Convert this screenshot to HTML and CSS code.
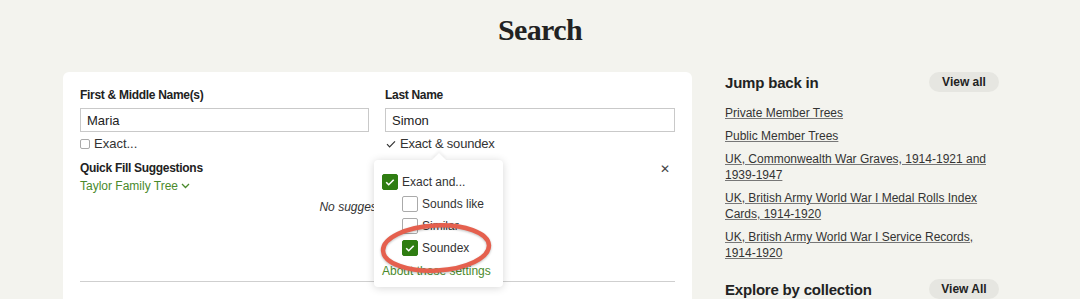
FILE: index.html
```html
<!DOCTYPE html>
<html lang="en">
<head>
  <meta charset="UTF-8">
  <meta name="viewport" content="width=device-width, initial-scale=1.0">
  <title>Search</title>
  <link rel="stylesheet" href="styles.css">
</head>
<body>
  <h1 class="page-title">Search</h1>

  <div class="page">
    <div class="search-card">
      <div class="name-fields">
        <div class="field">
          <label class="field-label">First &amp; Middle Name(s)</label>
          <input class="field-input" type="text" value="Maria">
          <div class="field-option">
            <span class="small-box"></span>
            <span>Exact...</span>
          </div>
        </div>
        <div class="field">
          <label class="field-label">Last Name</label>
          <input class="field-input" type="text" value="Simon">
          <div class="field-option with-popover">
            <svg class="tick" width="10" height="10" viewBox="0 0 10 10"><path d="M1 5.2l2.6 2.6L9 2.4" fill="none" stroke="#333" stroke-width="1.2"/></svg>
            <span>Exact &amp; soundex</span>

            <div class="popover">
              <div class="pop-row">
                <span class="check on"><svg width="12" height="12" viewBox="0 0 12 12"><path d="M2.2 6.2l2.5 2.5 5-5" fill="none" stroke="#fff" stroke-width="1.6"/></svg></span>
                <span>Exact and...</span>
              </div>
              <div class="pop-row sub">
                <span class="check"></span>
                <span>Sounds like</span>
              </div>
              <div class="pop-row sub">
                <span class="check"></span>
                <span>Similar</span>
              </div>
              <div class="pop-row sub">
                <span class="check on"><svg width="12" height="12" viewBox="0 0 12 12"><path d="M2.2 6.2l2.5 2.5 5-5" fill="none" stroke="#fff" stroke-width="1.6"/></svg></span>
                <span>Soundex</span>
              </div>
              <a class="pop-link" href="#">About these settings</a>

              <svg class="callout" width="120" height="60" viewBox="0 0 120 60">
                <ellipse cx="60" cy="29" rx="53" ry="22.5" transform="rotate(-3 60 29)" fill="none" stroke="#e5604e" stroke-width="4.5"/>
              </svg>
            </div>
          </div>
        </div>
      </div>

      <div class="quick-fill">
        <div class="quick-head">
          <span class="quick-title">Quick Fill Suggestions</span>
          <span class="close">&#x2715;</span>
        </div>
        <a class="tree-link" href="#">Taylor Family Tree
          <svg width="9" height="6" viewBox="0 0 9 6"><path d="M1 1l3.5 3.5L8 1" fill="none" stroke="#4a8a2c" stroke-width="1.3"/></svg>
        </a>
        <p class="no-suggest">No suggestions found</p>
      </div>
      <div class="divider"></div>
    </div>

    <aside class="sidebar">
      <div class="side-head">
        <h2>Jump back in</h2>
        <button class="pill">View all</button>
      </div>
      <ul class="side-links">
        <li><a href="#">Private Member Trees</a></li>
        <li><a href="#">Public Member Trees</a></li>
        <li><a href="#">UK, Commonwealth War Graves, 1914-1921 and 1939-1947</a></li>
        <li><a href="#">UK, British Army World War I Medal Rolls Index Cards, 1914-1920</a></li>
        <li><a href="#">UK, British Army World War I Service Records, 1914-1920</a></li>
      </ul>
      <div class="side-head">
        <h2>Explore by collection</h2>
        <button class="pill">View All</button>
      </div>
    </aside>
  </div>
</body>
</html>
```

FILE: styles.css
```css
/* page */
body {
  margin: 0;
  background: #f3f3ee;
  font-family: "Liberation Sans", Arial, sans-serif;
  color: #2b2b2b;
  overflow: hidden;
}

.page-title {
  margin: 0;
  height: 72px;
  padding-top: 12px;
  box-sizing: border-box;
  text-align: center;
  font-family: "Liberation Serif", "Times New Roman", serif;
  font-size: 30px;
  line-height: 36px;
  letter-spacing: -0.6px;
  color: #222;
}

.page {
  display: flex;
  align-items: flex-start;
  gap: 33px;
  padding-left: 63px;
}

/* search card */
.search-card {
  width: 629px;
  min-height: 300px;
  box-sizing: border-box;
  padding: 15px 17px 0;
  background: #fff;
  border-radius: 6px;
}

.name-fields {
  display: grid;
  grid-template-columns: 289px 290px;
  gap: 16px;
}

.field-label {
  display: block;
  font-size: 12px;
  font-weight: bold;
  line-height: 16px;
  letter-spacing: -0.3px;
  margin-bottom: 5px;
  color: #222;
}

.field-input {
  display: block;
  width: 100%;
  height: 24px;
  box-sizing: border-box;
  border: 1px solid #c9c9c9;
  padding: 0 6px;
  font-family: inherit;
  font-size: 13px;
  color: #222;
}

.field-option {
  display: flex;
  align-items: center;
  gap: 4px;
  margin-top: 4px;
  font-size: 13px;
  line-height: 16px;
  color: #333;
}

.small-box {
  width: 10px;
  height: 10px;
  border: 1px solid #aaa;
  border-radius: 2px;
  box-sizing: border-box;
}

.with-popover {
  position: relative;
  letter-spacing: -0.2px;
}

.tick {
  margin-left: 1px;
}

/* popover */
.popover {
  position: absolute;
  left: -11px;
  top: 24px;
  width: 129px;
  height: 127px;
  box-sizing: border-box;
  padding: 14px 8px;
  background: #fff;
  border-radius: 4px;
  box-shadow: 0 1px 8px rgba(0, 0, 0, 0.16);
  letter-spacing: 0;
  z-index: 2;
}

.popover::before {
  content: "";
  position: absolute;
  left: 60px;
  top: -5px;
  width: 10px;
  height: 10px;
  background: #fff;
  transform: rotate(45deg);
  box-shadow: -2px -2px 3px rgba(0, 0, 0, 0.05);
}

.pop-row {
  position: relative;
  display: flex;
  align-items: center;
  gap: 4px;
  height: 16px;
  margin-bottom: 6px;
  font-size: 12px;
  color: #333;
}

.pop-row.sub {
  padding-left: 20px;
}

.check {
  width: 16px;
  height: 16px;
  box-sizing: border-box;
  border: 1px solid #aaa;
  border-radius: 2px;
  display: flex;
  align-items: center;
  justify-content: center;
  background: #fff;
}

.check.on {
  background: #2f7d12;
  border-color: #2f7d12;
}

.pop-link {
  display: block;
  margin-top: 7px;
  font-size: 12px;
  line-height: 16px;
  color: #4a8a2c;
  text-decoration: none;
  white-space: nowrap;
}

.callout {
  position: absolute;
  left: 2px;
  top: 59px;
  filter: drop-shadow(0 1px 1px rgba(0, 0, 0, 0.25));
}

/* quick fill */
.quick-fill {
  margin-top: 8px;
}

.quick-head {
  display: flex;
  justify-content: space-between;
  align-items: center;
}

.quick-title {
  font-size: 12px;
  font-weight: bold;
  line-height: 16px;
  letter-spacing: -0.3px;
  color: #222;
}

.close {
  font-size: 12px;
  color: #444;
  margin-right: 5px;
  margin-top: 2px;
}

.tree-link {
  display: inline-flex;
  align-items: center;
  gap: 3px;
  margin-top: 2px;
  font-size: 12px;
  line-height: 16px;
  color: #4a8a2c;
  text-decoration: none;
}

.no-suggest {
  margin: 5px 0 0;
  text-align: center;
  font-size: 12px;
  font-style: italic;
  line-height: 16px;
  color: #333;
}

.divider {
  margin-top: 66px;
  border-top: 1px solid #cfcfcf;
}

/* sidebar */
.sidebar {
  width: 274px;
}

.side-head {
  display: flex;
  justify-content: space-between;
  align-items: center;
  height: 20px;
}

.side-head h2 {
  margin: 0;
  font-size: 15px;
  font-weight: bold;
  letter-spacing: -0.2px;
  color: #222;
}

.pill {
  width: 70px;
  height: 20px;
  border: none;
  border-radius: 10px;
  background: #e6e6e1;
  font-family: inherit;
  font-size: 12px;
  font-weight: bold;
  color: #222;
  padding: 0;
}

.side-links {
  list-style: none;
  margin: 13px 0 18px;
  padding: 0;
}

.side-links li {
  margin-bottom: 7px;
  font-size: 12px;
  line-height: 16px;
}

.side-links a {
  color: #333;
  text-decoration: underline;
  text-decoration-color: #777;
}
```
